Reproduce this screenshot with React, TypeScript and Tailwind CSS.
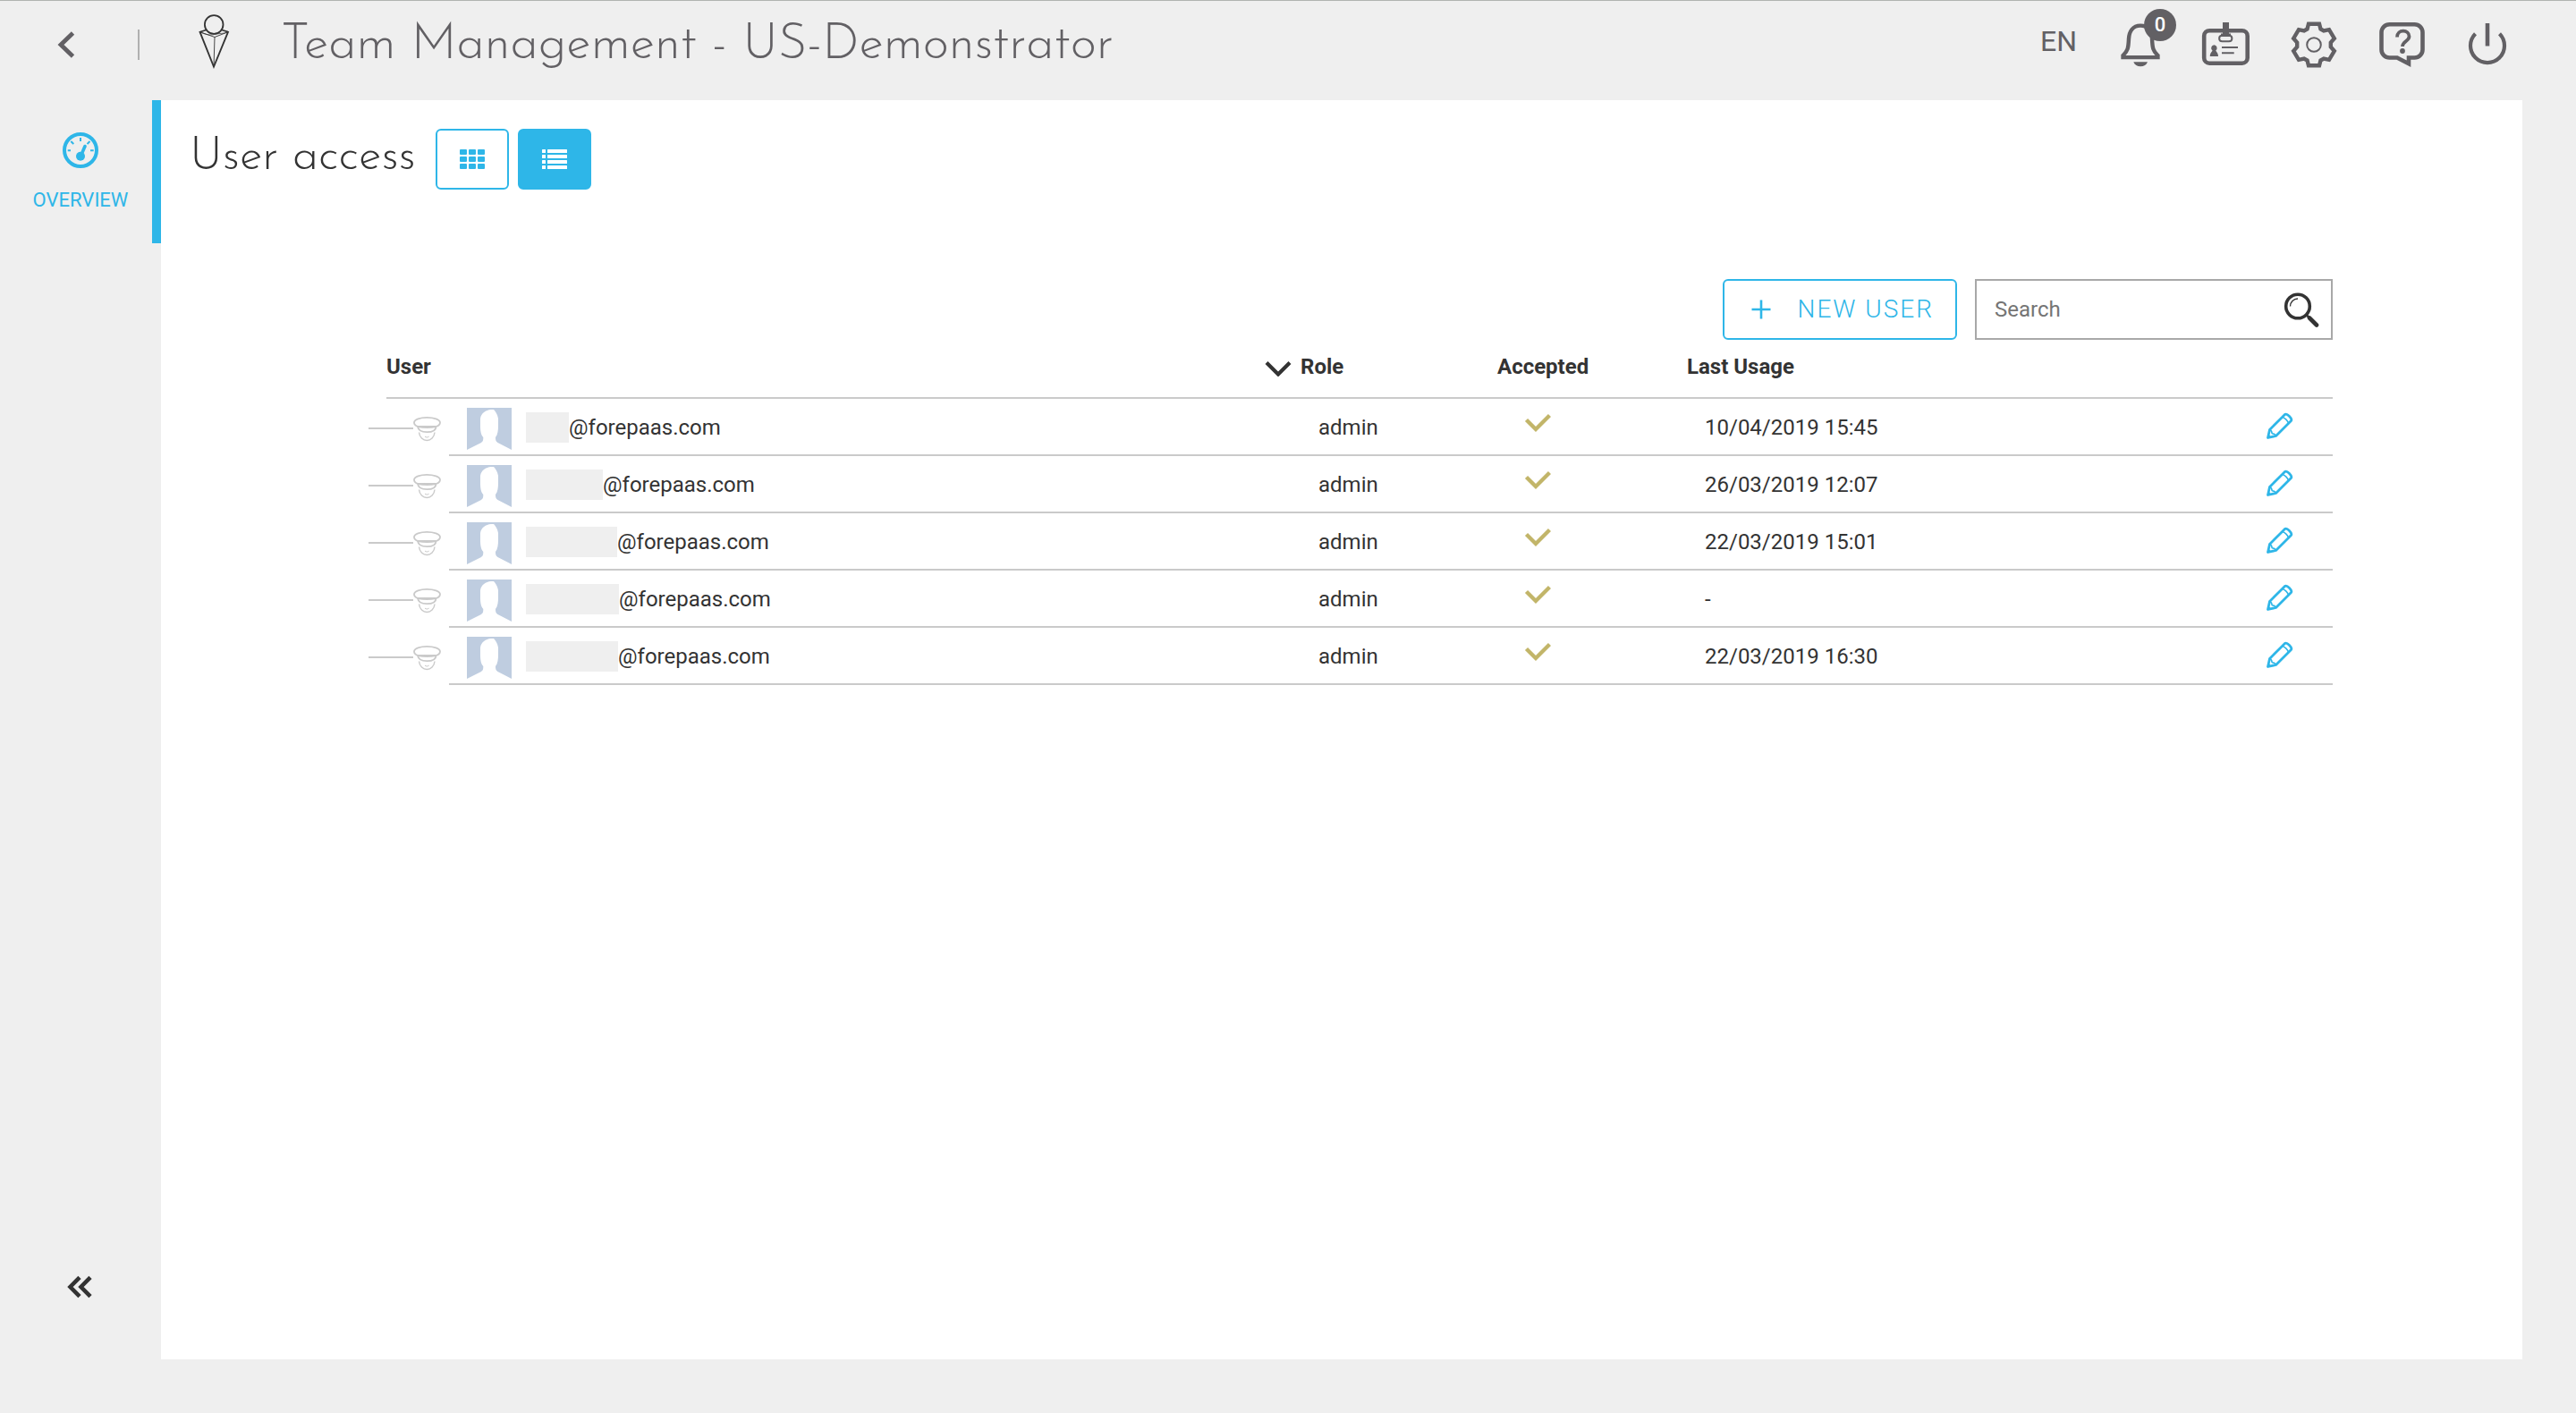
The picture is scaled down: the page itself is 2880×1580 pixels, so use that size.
import { useState, type ReactNode } from 'react';

type User = { maskWidth: string; domain: string; role: string; lastUsage: string };

const users: User[] = [
  { maskWidth: 'w-12', domain: '@forepaas.com', role: 'admin', lastUsage: '10/04/2019 15:45' },
  { maskWidth: 'w-[86px]', domain: '@forepaas.com', role: 'admin', lastUsage: '26/03/2019 12:07' },
  { maskWidth: 'w-[102px]', domain: '@forepaas.com', role: 'admin', lastUsage: '22/03/2019 15:01' },
  { maskWidth: 'w-[104px]', domain: '@forepaas.com', role: 'admin', lastUsage: '-' },
  { maskWidth: 'w-[103px]', domain: '@forepaas.com', role: 'admin', lastUsage: '22/03/2019 16:30' },
];

function LogoIcon() {
  return (
    <svg width="36" height="64" viewBox="0 0 36 64" fill="none" stroke="#333" strokeWidth="1.8" aria-hidden="true">
      <path d="M8.5 19.5 1.5 21.7 17 60.5 33 21.7 26 19.5" />
      <path d="M1.5 21.7 18 27.5 33 21.7M18 27.5 17 60.5" strokeWidth="0.9" />
      <path d="M1.5 21.7C6 24 12 26 17.5 24.5S29 24 33 21.7" strokeWidth="0.7" />
      <circle cx="17.2" cy="13.5" r="10.3" fill="#efefef" />
    </svg>
  );
}

function BellIcon() {
  return (
    <svg width="48" height="52" viewBox="0 14 48 54" fill="none" stroke="currentColor" strokeWidth="4.6" aria-hidden="true">
      <path d="M24 18.8C15 18.8 11 26 10.5 34 10 45 9.5 48 3.8 53.5V55.7H44.2V53.5C38.5 48 38 45 37.5 34 37 26 33 18.8 24 18.8Z" />
      <path d="M16 61H32.3C31 64.5 28 66.2 24.2 66.2S17.3 64.5 16 61Z" fill="currentColor" stroke="none" />
    </svg>
  );
}

function BadgeIcon() {
  return (
    <svg width="56" height="54" viewBox="0 0 56 54" fill="none" stroke="currentColor" aria-hidden="true">
      <rect x="4.2" y="11.2" width="48.5" height="36.5" rx="6" strokeWidth="4.6" />
      <path d="M25 2H32V14.5H34V18H23V14.5H25Z" fill="currentColor" stroke="none" />
      <path d="M24.5 16.8C20 16.8 20 23.2 24.5 23.2H32C36.5 23.2 36.5 16.8 32 16.8" strokeWidth="2" />
      <path d="M15.4 27.2a3.4 3.4 0 0 1 2 6C17 35 20 35 20 40H10.8C10.8 35 13.8 35 13.4 33.2a3.4 3.4 0 0 1 2-6Z" fill="currentColor" stroke="none" />
      <path d="M24 30H42M24 36.3H37.7" strokeWidth="2" />
    </svg>
  );
}

function GearIcon() {
  return (
    <svg width="56" height="56" viewBox="-28 -28 56 56" fill="none" stroke="currentColor" aria-hidden="true">
      <path
        d="M-6-23.3H6L7.5-17.5 11-15.5 17-16.8 22.8-7 18.8-2.5V2.5L22.8 7 17 16.8 11 15.5 7.5 17.5 6 23.3H-6L-7.5 17.5-11 15.5-17 16.8-22.8 7-18.8 2.5V-2.5L-22.8-7-17-16.8-11-15.5-7.5-17.5Z"
        strokeWidth="4.4"
      />
      <circle r="7.8" strokeWidth="2" />
    </svg>
  );
}

function HelpIcon() {
  return (
    <svg width="56" height="54" viewBox="0 0 56 54" fill="none" stroke="currentColor" strokeWidth="4.6" aria-hidden="true">
      <path d="M13.5 4.3H41.5a9 9 0 0 1 9 9V32.5a9 9 0 0 1-9 9H35V48.3L22 41.5H13.5a9 9 0 0 1-9-9V13.3a9 9 0 0 1 9-9Z" />
      <path d="M22 18.5C22 9.5 35.5 9.5 35.5 17.8 35.5 23 28 23 28 29" strokeWidth="3.8" />
      <circle cx="28" cy="34" r="2.9" fill="currentColor" stroke="none" />
    </svg>
  );
}

function PowerIcon() {
  return (
    <svg width="48" height="52" viewBox="0 0 48 52" fill="none" stroke="currentColor" aria-hidden="true">
      <path d="M10.5 13.7A19 19 0 1 0 37.5 13.7" strokeWidth="4.2" />
      <path d="M24 2V27.5" strokeWidth="4.6" />
    </svg>
  );
}

function GaugeIcon() {
  return (
    <svg width="40" height="40" viewBox="0 0 40 40" fill="none" stroke="currentColor" aria-hidden="true">
      <circle cx="20" cy="20" r="18" strokeWidth="4" />
      <path d="M20 6V10M5.7 20.3H9M31 20.3H34.7M9.3 10 12.3 13M27.5 13 30.5 10" strokeWidth="2" />
      <path d="M20.5 26 25 15.5" strokeWidth="3.6" strokeLinecap="round" />
      <circle cx="20" cy="26.8" r="5" fill="currentColor" stroke="none" />
    </svg>
  );
}

function OfficerIcon() {
  return (
    <svg width="35" height="30" viewBox="2 0 35 30" fill="none" stroke="#cacaca" strokeWidth="1.8" aria-hidden="true">
      <path d="M3 8.5C3 5 10 2.8 17.3 2.8S32 5 32 8.500C32 10.500 30.500 12 27.500 13H7C4.500 12 3 10.500 3 8.500Z" />
      <path d="M7 13C13 14.200 22 14.200 27.500 13 27.500 17 24 19.200 17.300 19.200S7.500 17 7 13Z" />
      <path d="M8.500 19.500C9 25 13 28.500 17.300 28.500S25.500 25 26 19.500" strokeWidth="1.4" />
      <path d="M15 24.200Q17.300 26 19.600 24.200" strokeWidth="1" />
    </svg>
  );
}

function Avatar() {
  return (
    <svg width="50" height="47" viewBox="0 0 50 47" className="block" aria-hidden="true">
      <path
        d="M0 0H50V47L35.500 39.500C32.500 38 32 36.500 32 33 34.500 30 35 25 35 20V12C34 7 32 4 30 2H27C21 2.500 16 6 15 12V20C15 25 15.500 30 18.300 33 18.300 36.500 18 38 15 39.500L0 47Z"
        fill="#bfcde0"
      />
    </svg>
  );
}

function PencilIcon() {
  return (
    <svg width="30" height="30" viewBox="0 0 30 30" fill="none" stroke="currentColor" strokeWidth="2.8" strokeLinejoin="round" aria-hidden="true">
      <path d="M1.500 28.500 3.500 19.500 20.500 2.500C23 .8 29.200 7 27.500 9.500L10.500 26.500Z" />
      <path d="M17.500 5.500C20.500 6 24 9.500 24.500 12.500M3.500 19.500C5 20 6 21 6.200 23.800 9 24 10 25 10.500 26.500" strokeWidth="1.6" />
      <path d="M1 29 2.200 24.500 5.500 27.800Z" fill="currentColor" stroke="none" />
    </svg>
  );
}

function MagnifierIcon() {
  return (
    <svg width="42" height="40" viewBox="0 0 42 40" fill="none" stroke="#333" aria-hidden="true">
      <circle cx="17" cy="16.500" r="13.3" strokeWidth="3.6" />
      <path d="M26.500 26 30 29.500" strokeWidth="2.5" />
      <path d="M30 29.500 38 37.500" strokeWidth="4.6" strokeLinecap="round" />
      <path d="M8.500 16.500A8.500 8.500 0 0 1 17 8" strokeWidth="1.4" />
    </svg>
  );
}

function GridIcon() {
  return (
    <svg width="28" height="24" viewBox="0 0 28 24" fill="currentColor" aria-hidden="true">
      {[1, 9, 17].map((y) =>
        [0, 10, 20].map((x) => <rect key={`${x}-${y}`} x={x} y={y} width="8" height="6" rx="1" />),
      )}
    </svg>
  );
}

function ListIcon() {
  return (
    <svg width="28" height="24" viewBox="0 0 28 24" fill="currentColor" aria-hidden="true">
      {[1, 7, 13, 19].map((y) => (
        <g key={y}>
          <rect x="0" y={y} width="4" height="4" rx="0.5" />
          <rect x="6" y={y} width="22" height="4" rx="0.5" />
        </g>
      ))}
    </svg>
  );
}

function IconButton({ label, children }: { label: string; children: ReactNode }) {
  return (
    <button type="button" aria-label={label} className="relative shrink-0">
      {children}
    </button>
  );
}

function Header() {
  return (
    <header className="flex h-28 items-center border-t border-[#b0b4b0] pr-[75px] pb-3.5 pl-16 text-[#626064]">
      <button type="button" aria-label="Back" className="shrink-0">
        <svg width="20" height="30" viewBox="0 0 20 30" fill="none" stroke="currentColor" strokeWidth="4.8" aria-hidden="true">
          <path d="M17.500 2 4 15 17.500 28" />
        </svg>
      </button>
      <span className="ml-[70px] h-[34px] w-0.5 shrink-0 bg-[#b0b0b0]" />
      <a href="#home" aria-label="Home" className="ml-[66px] shrink-0 pb-2">
        <LogoIcon />
      </a>
      <h1 className="ml-14 flex-1 pt-0.5 font-['Josefin_Sans',Lato,sans-serif] text-[56px] leading-[64px] font-light whitespace-nowrap">
        Team Management - US-Demonstrator
      </h1>
      <nav aria-label="Tools" className="flex items-center gap-[43px]">
        <button type="button" className="mr-1 pb-2 text-[32px] leading-10">
          EN
        </button>
        <IconButton label="Notifications">
          <BellIcon />
          <span className="absolute -top-3.5 left-7 flex size-9 items-center justify-center rounded-full bg-[#626064] text-[22px] leading-none font-medium text-white">
            0
          </span>
        </IconButton>
        <IconButton label="Profile">
          <BadgeIcon />
        </IconButton>
        <IconButton label="Settings">
          <GearIcon />
        </IconButton>
        <IconButton label="Help">
          <HelpIcon />
        </IconButton>
        <IconButton label="Log out">
          <PowerIcon />
        </IconButton>
      </nav>
    </header>
  );
}

function Sidebar() {
  return (
    <aside className="flex w-[180px] shrink-0 flex-col justify-between">
      <a
        href="#overview"
        className="flex h-40 flex-col items-center border-r-10 border-[#2eb6e8] pt-9 pl-2.5 text-[22px] leading-8 text-[#2eb6e8]"
      >
        <GaugeIcon />
        <span className="mt-5">OVERVIEW</span>
      </a>
      <button type="button" aria-label="Collapse menu" className="mb-32 self-center">
        <svg width="30" height="26" viewBox="0 0 30 26" fill="none" stroke="#333" strokeWidth="4.6" aria-hidden="true">
          <path d="M14 2.300 3.500 13 14 23.700M26 2.300 15.500 13 26 23.700" />
        </svg>
      </button>
    </aside>
  );
}

function UserTable({ rows }: { rows: User[] }) {
  const [ascending, setAscending] = useState(false);
  const th = 'h-[66px] border-b-2 border-[#cacaca] pb-1 text-left font-bold';
  const td = 'border-b-2 border-[#cacaca]';
  return (
    <table className="w-full table-fixed border-separate border-spacing-0 text-2xl">
      <colgroup>
        <col className="w-5" />
        <col className="w-[70px]" />
        <col />
        <col className="w-[260px]" />
        <col className="w-[212px]" />
        <col className="w-[600px]" />
        <col className="w-[122px]" />
      </colgroup>
      <thead>
        <tr>
          <td />
          <th scope="col" colSpan={2} className={th}>
            User
          </th>
          <th scope="col" className={th}>
            <button type="button" className="flex items-center gap-2.5 font-bold" onClick={() => setAscending(!ascending)}>
              <svg width="30" height="18" viewBox="0 0 30 18" fill="none" stroke="#333" strokeWidth="4.2" className="mt-1" aria-hidden="true">
                <path d="M2 2.500 15 15.500 28 2.500" />
              </svg>
              Role
            </button>
          </th>
          <th scope="col" className={th}>
            Accepted
          </th>
          <th scope="col" className={th}>
            Last Usage
          </th>
          <td className={th} />
        </tr>
      </thead>
      <tbody>
        {rows.map((user, i) => (
          <tr key={i} className="h-16">
            <td colSpan={2} className="pt-0.5">
              <div className="flex items-center">
                <span className="h-0.5 w-[50px] bg-[#cacaca]" />
                <OfficerIcon />
              </div>
            </td>
            <td className={td}>
              <div className="flex items-center pt-0.5 pl-5">
                <div className="pt-0.5">
                  <Avatar />
                </div>
                <span className={`ml-4 h-[34px] shrink-0 bg-[#efefef] ${user.maskWidth}`} />
                <span>{user.domain}</span>
              </div>
            </td>
            <td className={`${td} pt-0.5 pl-[60px]`}>{user.role}</td>
            <td className={`${td} pb-2 pl-[30px]`}>
              <svg width="30" height="22" viewBox="0 0 30 22" fill="none" stroke="#c2b569" strokeWidth="4.4" role="img" aria-label="Accepted">
                <path d="M2.500 7.500 13 18 28.500 2.500" />
              </svg>
            </td>
            <td className={`${td} pt-0.5 pl-5`}>{user.lastUsage}</td>
            <td className={`${td} pr-11 pb-1 text-right`}>
              <button type="button" aria-label="Edit user" className="align-middle text-[#2eb6e8]">
                <PencilIcon />
              </button>
            </td>
          </tr>
        ))}
      </tbody>
    </table>
  );
}

export default function App() {
  const [view, setView] = useState<'grid' | 'list'>('list');
  const on = 'bg-[#2eb6e8] text-white';
  const off = 'bg-white text-[#2eb6e8]';
  const toggle = 'flex h-[68px] w-[82px] items-center justify-center rounded-md border-2 border-[#2eb6e8]';

  return (
    <div className="flex min-h-screen flex-col bg-[#efefef] font-[Roboto,sans-serif] text-[#333]">
      <Header />
      <div className="flex flex-1">
        <Sidebar />
        <main className="mr-[60px] mb-[60px] flex-1 bg-white pt-8">
          <div className="flex items-start pl-8">
            <h2 className="font-['Josefin_Sans',Lato,sans-serif] text-[52px] leading-[64px] font-light whitespace-nowrap">
              User access
            </h2>
            <div className="ml-[22px] flex gap-2.5">
              <button
                type="button"
                aria-label="Grid view"
                aria-pressed={view === 'grid'}
                onClick={() => setView('grid')}
                className={`${toggle} ${view === 'grid' ? on : off}`}
              >
                <GridIcon />
              </button>
              <button
                type="button"
                aria-label="List view"
                aria-pressed={view === 'list'}
                onClick={() => setView('list')}
                className={`${toggle} ${view === 'list' ? on : off}`}
              >
                <ListIcon />
              </button>
            </div>
          </div>

          <section className="mt-[100px] pr-[212px] pl-[232px]">
            <div className="flex justify-end gap-5">
              <button
                type="button"
                className="flex h-[68px] items-center gap-[30px] rounded-md border-2 border-[#2eb6e8] pr-6 pl-[30px] text-[28px] leading-8 font-light tracking-[2px] text-[#2eb6e8]"
              >
                <svg width="22" height="22" viewBox="0 0 22 22" stroke="currentColor" strokeWidth="2.6" aria-hidden="true">
                  <path d="M11 .5V21.500M.5 11H21.500" />
                </svg>
                NEW USER
              </button>
              <form
                role="search"
                onSubmit={(e) => e.preventDefault()}
                className="flex h-[68px] w-[400px] items-center border-2 border-[#a8a8a8] pr-3 pl-5"
              >
                <input
                  type="search"
                  aria-label="Search"
                  placeholder="Search"
                  className="min-w-0 flex-1 text-2xl outline-none placeholder:text-[#757575]"
                />
                <button type="submit" aria-label="Run search">
                  <MagnifierIcon />
                </button>
              </form>
            </div>
            <UserTable rows={users} />
          </section>
        </main>
      </div>
    </div>
  );
}
